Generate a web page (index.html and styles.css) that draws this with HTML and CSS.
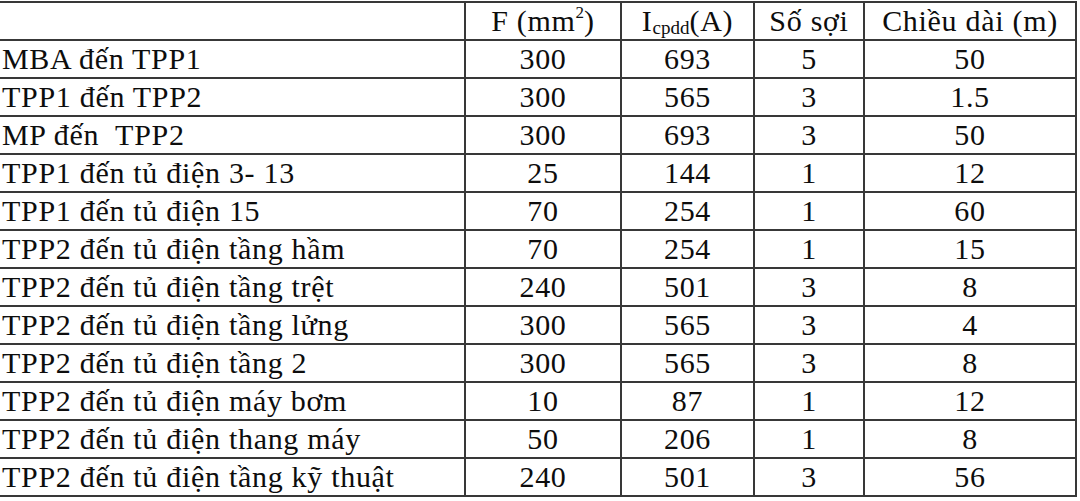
FILE: index.html
```html
<!DOCTYPE html>
<html lang="vi">
<head>
<meta charset="utf-8">
<title>Bảng dây dẫn</title>
<link rel="stylesheet" href="styles.css">
</head>
<body>
<table class="cable-table">
  <colgroup>
    <col class="c-name">
    <col class="c-f">
    <col class="c-i">
    <col class="c-n">
    <col class="c-l">
  </colgroup>
  <thead>
    <tr>
      <th class="name"></th>
      <th>F (mm<sup>2</sup>)</th>
      <th>I<sub>cpdd</sub>(A)</th>
      <th>Số sợi</th>
      <th>Chiều dài (m)</th>
    </tr>
  </thead>
  <tbody>
    <tr><td class="name">MBA đến TPP1</td><td>300</td><td>693</td><td>5</td><td>50</td></tr>
    <tr><td class="name">TPP1 đến TPP2</td><td>300</td><td>565</td><td>3</td><td>1.5</td></tr>
    <tr><td class="name">MP đến&nbsp; TPP2</td><td>300</td><td>693</td><td>3</td><td>50</td></tr>
    <tr><td class="name">TPP1 đến tủ điện 3- 13</td><td>25</td><td>144</td><td>1</td><td>12</td></tr>
    <tr><td class="name">TPP1 đến tủ điện 15</td><td>70</td><td>254</td><td>1</td><td>60</td></tr>
    <tr><td class="name">TPP2 đến tủ điện tầng hầm</td><td>70</td><td>254</td><td>1</td><td>15</td></tr>
    <tr><td class="name">TPP2 đến tủ điện tầng trệt</td><td>240</td><td>501</td><td>3</td><td>8</td></tr>
    <tr><td class="name">TPP2 đến tủ điện tầng lửng</td><td>300</td><td>565</td><td>3</td><td>4</td></tr>
    <tr><td class="name">TPP2 đến tủ điện tầng 2</td><td>300</td><td>565</td><td>3</td><td>8</td></tr>
    <tr><td class="name">TPP2 đến tủ điện máy bơm</td><td>10</td><td>87</td><td>1</td><td>12</td></tr>
    <tr><td class="name">TPP2 đến tủ điện thang máy</td><td>50</td><td>206</td><td>1</td><td>8</td></tr>
    <tr><td class="name">TPP2 đến tủ điện tầng kỹ thuật</td><td>240</td><td>501</td><td>3</td><td>56</td></tr>
  </tbody>
</table>
</body>
</html>
```

FILE: styles.css
```css
html, body {
  margin: 0;
  padding: 0;
  background: #ffffff;
}

body {
  padding-top: 1px;
}

.cable-table {
  border-collapse: collapse;
  table-layout: fixed;
  width: 1076px;
  font-family: "Liberation Serif", "Times New Roman", serif;
  font-size: 30px;
  letter-spacing: 0.7px;
  color: #0d0d0d;
}

.c-name { width: 465px; }
.c-f { width: 156px; }
.c-i { width: 133px; }
.c-n { width: 110px; }
.c-l { width: 212px; }

.cable-table th,
.cable-table td {
  border: 2px solid #383838;
  height: 36px;
  padding: 0;
  line-height: 34px;
  text-align: center;
  vertical-align: middle;
  font-weight: normal;
  white-space: nowrap;
  overflow: hidden;
}

.cable-table .name {
  text-align: left;
  padding-left: 2px;
  border-left: none;
}

.cable-table sup {
  font-size: 17px;
  line-height: 0;
  vertical-align: 13px;
  letter-spacing: 0;
}

.cable-table sub {
  font-size: 19px;
  line-height: 0;
  vertical-align: -3px;
  letter-spacing: 0;
}
```
